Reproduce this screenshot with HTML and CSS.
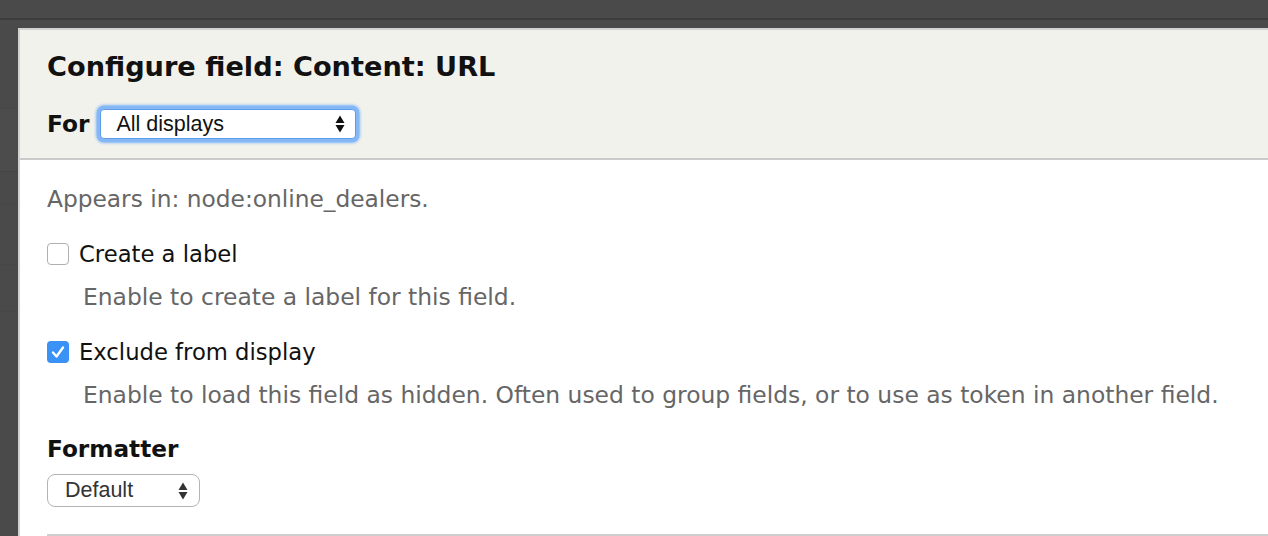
FILE: index.html
```html
<!DOCTYPE html>
<html>
<head>
<meta charset="utf-8">
<link rel="stylesheet" href="styles.css">
</head>
<body>
<div class="topbar"></div>
<div class="stage">
  <div class="backdrop"></div>
  <div class="dialog">
    <div class="header">
      <h1 class="title">Configure field: Content: URL</h1>
      <div class="for-row">
        <span class="for-label">For</span>
        <div class="select select-focus">
          <span class="select-text">All displays</span>
          <svg class="arrows" width="10" height="18" viewBox="0 0 10 18"><path d="M5 0.5 L9.5 8 L0.5 8 Z M0.5 10 L9.5 10 L5 17.5 Z" fill="#111"/></svg>
        </div>
      </div>
    </div>
    <div class="content">
      <p class="appears">Appears in: node:online_dealers.</p>
      <div class="check-row">
        <span class="checkbox"></span>
        <span class="check-label">Create a label</span>
      </div>
      <p class="desc">Enable to create a label for this field.</p>
      <div class="check-row">
        <span class="checkbox checked"><svg width="22" height="22" viewBox="0 0 22 22"><path d="M6 11.5 L9.5 15.5 L16 6.5" fill="none" stroke="#fff" stroke-width="2.4" stroke-linecap="round" stroke-linejoin="round"/></svg></span>
        <span class="check-label">Exclude from display</span>
      </div>
      <p class="desc">Enable to load this field as hidden. Often used to group fields, or to use as token in another field.</p>
      <h2 class="formatter">Formatter</h2>
      <div class="select select-small">
        <span class="select-text">Default</span>
        <svg class="arrows" width="10" height="18" viewBox="0 0 10 18"><path d="M5 0.5 L9.5 8 L0.5 8 Z M0.5 10 L9.5 10 L5 17.5 Z" fill="#333"/></svg>
      </div>
      <div class="rule"></div>
    </div>
  </div>
</div>
</body>
</html>
```
FILE: styles.css
```css
html, body {
  margin: 0;
  padding: 0;
  height: 100%;
  overflow: hidden;
}
body {
  background: #4a4a4a;
  font-family: "DejaVu Sans", Verdana, sans-serif;
}
.topbar {
  height: 18px;
  background: #4a4a4a;
  border-bottom: 2px solid #3d3d3d;
}
.stage {
  display: flex;
  padding-top: 8px;
}
.backdrop {
  width: 18px;
  flex: none;
  height: 516px;
  background:
    linear-gradient(to bottom,
      #4a4a4a 0, #4a4a4a 80px,
      #474747 80px, #474747 81px,
      #4c4c4c 81px, #4c4c4c 143px,
      #464646 143px, #464646 144px,
      #4a4a4a 144px, #4a4a4a 175px,
      #474747 175px, #474747 176px,
      #4a4a4a 176px, #4a4a4a 236px,
      #474747 236px, #474747 237px,
      #4a4a4a 237px, #4a4a4a 283px,
      #474747 283px, #474747 284px,
      #4a4a4a 284px);
}
.dialog {
  flex: 1;
  border-top: 2px solid #d2d2d2;
  border-left: 2px solid #d2d2d2;
  background: #fff;
  height: 520px;
}
.header {
  background: #f2f2ed;
  border-bottom: 2px solid #cacaca;
  height: 128px;
  box-sizing: content-box;
  padding: 0 0 0 27px;
  display: flex;
  flex-direction: column;
}
.title {
  margin: 21px 0 0;
  font-size: 27.2px;
  font-weight: bold;
  line-height: 32px;
  color: #111;
}
.for-row {
  display: flex;
  align-items: center;
  margin-top: 26px;
}
.for-label {
  font-size: 23.3px;
  font-weight: bold;
  line-height: 28px;
  color: #111;
}
.select {
  display: flex;
  align-items: center;
  justify-content: space-between;
  box-sizing: border-box;
  background: #fff;
  font-family: "Liberation Sans", Arial, sans-serif;
  font-size: 21.5px;
  color: #111;
  flex: none;
}
.select-focus {
  width: 256px;
  height: 30px;
  border: 1px solid #5f9de9;
  border-radius: 4px;
  box-shadow: 0 0 0 3.5px #84b7f6, 0 0 2px 5px rgba(135,185,246,0.5);
  padding: 0 10px 0 15px;
  margin-left: 11px;
}
.select-small {
  width: 153px;
  height: 33px;
  border: 1px solid #b4b4b4;
  border-radius: 8px;
  padding: 0 11px 0 17px;
  color: #333;
  margin-top: 11px;
}
.arrows {
  display: block;
}
.content {
  padding: 25px 0 0 27px;
}
.appears {
  margin: 0;
  font-size: 23.3px;
  line-height: 28px;
  color: #666;
}
.check-row {
  display: flex;
  align-items: center;
  gap: 10px;
  margin-top: 27px;
}
.checkbox {
  width: 22px;
  height: 22px;
  box-sizing: border-box;
  border: 1px solid #b0b0b0;
  border-radius: 4px;
  background: #fff;
  flex: none;
  display: flex;
}
.checkbox.checked {
  border: none;
  background: #3a91f6;
}
.check-label {
  font-size: 22.7px;
  line-height: 28px;
  color: #111;
}
.desc {
  margin: 15px 0 0 36px;
  font-size: 23.4px;
  line-height: 28px;
  color: #666;
  white-space: nowrap;
}
.formatter {
  margin: 26px 0 0;
  font-size: 23.2px;
  font-weight: bold;
  line-height: 28px;
  color: #111;
}
.rule {
  margin-top: 27px;
  height: 2px;
  background: #cfcfcf;
}
```
